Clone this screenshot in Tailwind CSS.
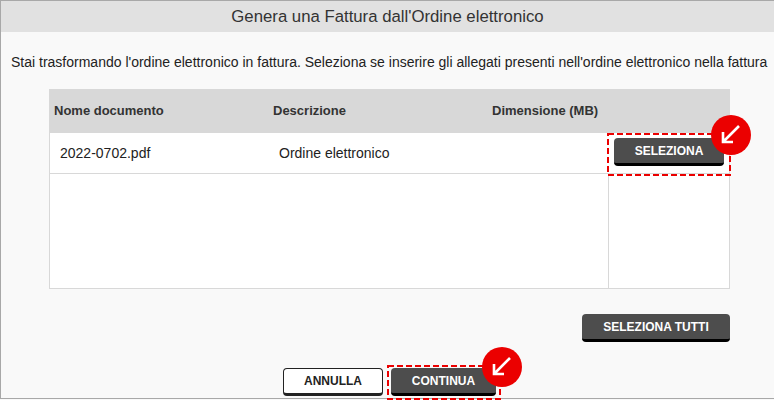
<!DOCTYPE html>
<html lang="en">
<head>
	<meta charset="UTF-8">
	<title>Genera una Fattura</title>
	<script src="https://cdn.jsdelivr.net/npm/@tailwindcss/browser@4"></script>
</head>
<body class="h-[400px] w-[774px] overflow-hidden bg-[#f9f9f9] font-['Liberation_Sans',Arial,sans-serif]">
	<div class="flex h-[399px] flex-col border-t border-l border-b border-[#a8a8a8]">
		<div class="flex h-[31px] shrink-0 items-center justify-center bg-[#e1e1e1] text-[16.75px] text-[#333]">Genera una Fattura dall'Ordine elettronico</div>

		<p class="mt-[21px] ml-[10px] whitespace-nowrap text-[14px] leading-[18px] text-[#222]">Stai trasformando l'ordine elettronico in fattura. Seleziona se inserire gli allegati presenti nell'ordine elettronico nella fattura</p>

		<div class="mt-[18px] ml-[48px] w-[681px] border-r border-b border-l border-[#d8d8d8] bg-white">
			<div class="flex h-[44px] items-center bg-[#d8d8d8] text-[13px] font-bold text-[#333]">
				<span class="ml-[4px] w-[219px]">Nome documento</span>
				<span class="w-[219px]">Descrizione</span>
				<span>Dimensione (MB)</span>
			</div>
			<div class="flex h-[41px] border-b border-[#d8d8d8] text-[14px] text-[#222]">
				<span class="ml-[10px] w-[219px] self-center">2022-0702.pdf</span>
				<span class="w-[329px] self-center">Ordine elettronico</span>
				<div class="relative flex-1 pt-[5px] pl-[6px]">
					<button class="flex h-[28px] w-[110px] items-center justify-center rounded-[4px] border-b-[3px] border-black bg-[#4d4d4d] text-[12px] font-bold text-white">SELEZIONA</button>
					<svg class="absolute top-0 -left-[1px]" width="124" height="43" fill="none" stroke="#eb0000" stroke-width="2"><rect x="1" y="1" width="122" height="41" stroke-dasharray="6 3"/></svg>
					<div class="absolute -top-[18px] left-[103px] h-[40px] w-[40px] rounded-full bg-[#eb0000]">
						<svg width="40" height="40" fill="none" stroke="#fff" stroke-width="2.6"><path d="M28 11L12 27M12 17V27H22"/></svg>
					</div>
				</div>
			</div>
			<div class="flex h-[114px]">
				<div class="w-[559px] border-r border-[#d8d8d8]"></div>
			</div>
		</div>

		<div class="mt-[25px] ml-[581px]">
			<button class="flex h-[28px] w-[148px] items-center justify-center rounded-[4px] border-b-[3px] border-black bg-[#4d4d4d] text-[12px] font-bold text-white">SELEZIONA TUTTI</button>
		</div>

		<div class="mt-[26px] ml-[282px] flex items-start gap-[8px]">
			<button class="flex h-[28px] w-[100px] items-center justify-center rounded-[4px] border border-b-[3px] border-[#222] bg-white text-[12px] font-bold text-[#222]">ANNULLA</button>
			<div class="relative">
				<button class="flex h-[28px] w-[105px] items-center justify-center rounded-[4px] border-b-[3px] border-black bg-[#4d4d4d] text-[12px] font-bold text-white">CONTINUA</button>
				<svg class="absolute -top-[3px] -left-[4px]" width="114" height="35" fill="none" stroke="#eb0000" stroke-width="2"><rect x="1" y="1" width="112" height="33" stroke-dasharray="6 3"/></svg>
				<div class="absolute -top-[21px] left-[91px] h-[40px] w-[40px] rounded-full bg-[#eb0000]">
					<svg width="40" height="40" fill="none" stroke="#fff" stroke-width="2.6"><path d="M28 11L12 27M12 17V27H22"/></svg>
				</div>
			</div>
		</div>
	</div>
</body>
</html>
